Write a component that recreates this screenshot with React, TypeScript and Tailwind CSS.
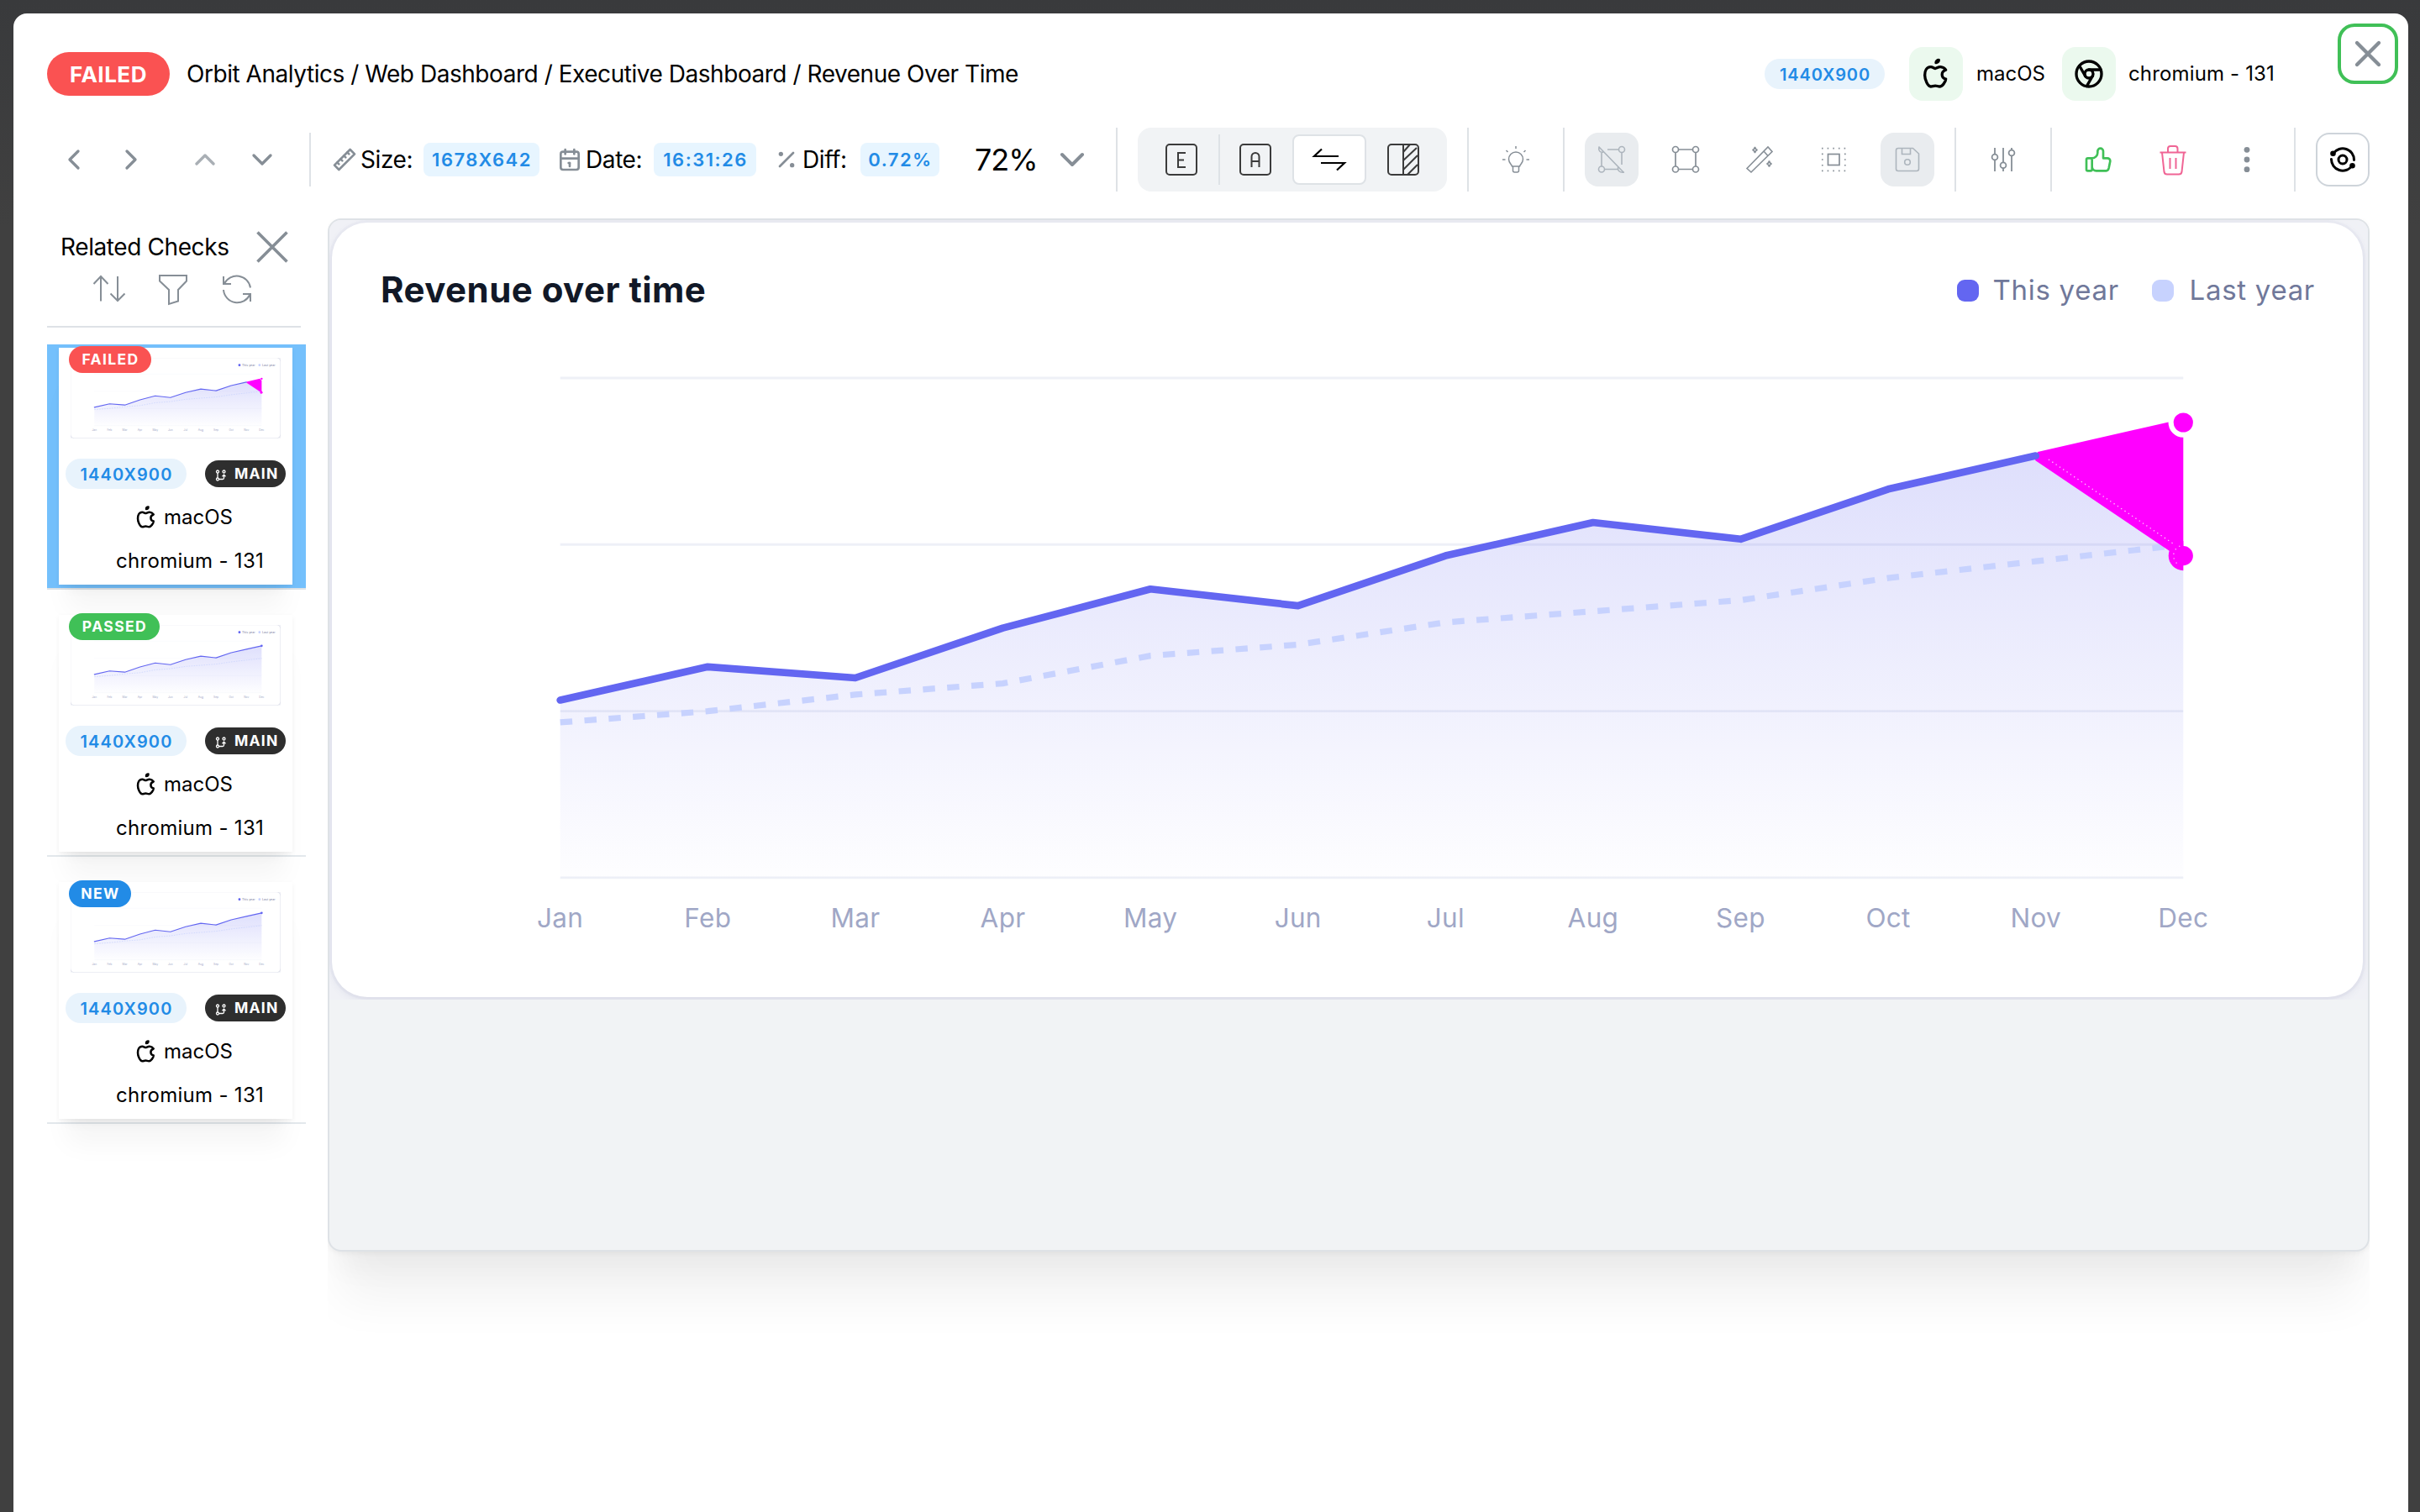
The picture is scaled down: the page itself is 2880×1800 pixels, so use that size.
import React from "react";
import { TbBrandApple, TbBrandChrome, TbChevronLeft, TbChevronRight, TbChevronUp, TbChevronDown, TbRuler2, TbCalendar, TbPercentage, TbX, TbThumbUp } from "react-icons/tb";

const MONTHS = ["Jan", "Feb", "Mar", "Apr", "May", "Jun", "Jul", "Aug", "Sep", "Oct", "Nov", "Dec"];
const THIS_YEAR = [32, 38, 36, 45, 52, 49, 58, 64, 61, 70, 76, 82];
const LAST_YEAR = [28, 30, 33, 35, 40, 42, 46, 48, 50, 54, 57, 60];

const px = (i: number) => 274.7 + i * 175.6;
const py = (v: number) => 783 - v * 6.61;
const toPath = (v: number[]) => v.map((n, i) => `${i ? "L" : "M"}${px(i).toFixed(1)} ${py(n).toFixed(1)}`).join(" ");

function Plot({ diff, thumb }: { diff: boolean; thumb: boolean }) {
  const id = React.useId();
  const solid = diff ? THIS_YEAR.slice(0, 11) : THIS_YEAR;
  const area = diff ? [...THIS_YEAR.slice(0, 11), 58] : THIS_YEAR;
  const ex = px(11);
  return (
    <svg viewBox="0 160 2426 680" className="block h-[680px] w-[2426px]">
      <defs>
        <linearGradient id={id} x1="0" y1="0" x2="0" y2="1">
          <stop offset="0" stopColor="#6366f1" stopOpacity="0.21" />
          <stop offset="1" stopColor="#6366f1" stopOpacity="0.01" />
        </linearGradient>
      </defs>
      {[0, 1, 2, 3].map((i) => (
        <line key={i} x1={px(0)} x2={ex} y1={188 + i * 198.3} y2={188 + i * 198.3} stroke="#eef0f7" strokeWidth="2.9" />
      ))}
      <path d={`${toPath(area)} L${ex} 783 L${px(0)} 783 Z`} fill={`url(#${id})`} />
      <path d={toPath(LAST_YEAR)} fill="none" stroke="#c7d2fe" strokeWidth="7.2" strokeDasharray="14.45 14.45" />
      {diff && (
        <g fill="#ff00ff">
          <path d={`M2033 276 L${ex} 236.5 V399.5 L2190 394 L2030 286 Z`} />
          <circle cx={ex} cy={py(82)} r="17.8" fill="#fff" />
          <circle cx={ex} cy={py(82)} r="11.6" />
          <path d={`M${ex} 382 A17.6 17.6 0 0 0 ${ex} 417.2 Z`} />
          <circle cx={ex} cy="399.6" r="11.6" />
          <path d="M2046 285 L2194 385" stroke="#ffc8ff" strokeWidth="1.3" strokeDasharray="1.3 3.9" fill="none" />
          <path d={`M${ex - 4} 388 A12.5 12.5 0 0 0 ${ex - 4} 411`} stroke="#ffd6ff" strokeWidth="1.2" strokeDasharray="1.2 4.6" fill="none" />
        </g>
      )}
      <path d={toPath(solid)} fill="none" stroke="#6366f1" strokeWidth={thumb ? 11 : 8.7} strokeLinecap="round" strokeLinejoin="round" />
      {!diff && <circle cx={ex} cy={py(82)} r="13" fill="#6366f1" />}
      {MONTHS.map((m, i) => (
        <text key={m} x={px(i)} y="842" textAnchor="middle" className="fill-[#a0a7c6] font-['Inter'] text-[31.500px] tracking-[0.300px]">{m}</text>
      ))}
    </svg>
  );
}

function RevenueCard({ diff = false, thumb = false }: { diff?: boolean; thumb?: boolean }) {
  return (
    <div className="h-[928px] w-[2426px] shrink-0 overflow-hidden bg-[#f0f1f6] pt-[3px] pr-[6px] pb-[3px] pl-[3px]">
      <div className="h-[922px] w-[2417px] rounded-[42px] bg-white shadow-[0_0_0_3px_rgba(90,100,170,0.03),0_3px_10px_rgba(80,90,150,0.11)]">
        <div className="flex h-[155px] items-start justify-between pt-[52px] pr-[57px] pl-[58px]">
          <h2 className="text-[42px] leading-[56px] font-bold tracking-[0.450px] whitespace-nowrap text-[#111827]">Revenue over time</h2>
          <div className="mt-px flex h-[56px] items-center text-[33px] tracking-[0.700px] whitespace-nowrap text-[#70789a]">
            <span className="mr-[17px] size-[26px] rounded-[9px] bg-[#6366f1]" />
            <span className="w-[189px]">This year</span>
            <span className="mr-[19px] size-[26px] rounded-[9px] bg-[#c7d2fe]" />
            <span>Last year</span>
          </div>
        </div>
        <div className="-ml-[3px] mt-[2px] [&>svg]:overflow-visible">
          <Plot diff={diff} thumb={thumb} />
        </div>
      </div>
    </div>
  );
}

function Divider() {
  return <div className="h-[76px] w-[2px] shrink-0 bg-[#dee2e6]" />;
}

function Cell({ filled = false, children }: { filled?: boolean; children: React.ReactNode }) {
  return (
    <div className={filled ? "flex size-16 shrink-0 items-center justify-center rounded-2xl bg-[#e9ecef] text-[#adb5bd]" : "flex size-16 shrink-0 items-center justify-center text-[#868e96]"}>
      {children}
    </div>
  );
}

/* Line icon on a 40 x 40 grid whose centre is 20,20. */
function Ico({ w = 2, children }: { w?: number; children: React.ReactNode }) {
  return (
    <svg viewBox="0 0 40 40" className="size-10 shrink-0 overflow-visible" fill="none" stroke="currentColor" strokeWidth={w}>
      {children}
    </svg>
  );
}

function Metric({ icon, label, labelClass, value, valueClass }: { icon: React.ReactNode; label: string; labelClass: string; value: string; valueClass: string }) {
  return (
    <div className="flex shrink-0 items-center">
      <span className="text-[#868e96]">{icon}</span>
      <span className={`pl-[3px] text-[28px] tracking-[-0.400px] whitespace-nowrap ${labelClass}`}>{label}</span>
      <span className={`flex h-10 items-center justify-center rounded-lg bg-[#e7f5ff] pl-px text-[22px] font-semibold tracking-[1.500px] text-[#228be6] ${valueClass}`}>{value}</span>
    </div>
  );
}

function BranchIcon() {
  return (
    <svg viewBox="0 0 14 14" className="mt-1 size-[14px]" fill="none" stroke="white" strokeWidth="1.3">
      <circle cx="3" cy="2.5" r="1.5" />
      <circle cx="10.5" cy="2.5" r="1.5" />
      <circle cx="3" cy="11.5" r="1.5" />
      <path d="M3 4v6M4.5 11.5h4.5q1.5 0 1.5-1.5V6.5M8.5 8.2l2-2 2 2" />
    </svg>
  );
}

function CheckCard({ status, statusClass, active = false, diff = false }: { status: string; statusClass: string; active?: boolean; diff?: boolean }) {
  return (
    <div className={active ? "h-[292px] w-[308px] border-b-2 border-[#dee2e6] bg-[#74c0fc] px-[14px] pt-1 bg-clip-padding" : "h-[292px] w-[308px] border-b-2 border-[#e3e8ec] px-[14px] pt-1"}>
      <div className="relative flex h-[282px] w-[278px] flex-col bg-white shadow-[0_2px_6px_rgba(0,0,0,0.05),0_40px_30px_-10px_rgba(0,0,0,0.04),0_14px_14px_-10px_rgba(0,0,0,0.05)]">
        <div className="mt-3 ml-[14px] h-[96px] w-[250px] overflow-hidden">
          <div className="h-[928px] w-[2426px] origin-top-left scale-[0.10305]">
            <RevenueCard diff={diff} thumb />
          </div>
        </div>
        <span className={`absolute top-[-2px] left-3 flex h-8 items-center justify-center rounded-full pl-px text-[17.500px] font-bold tracking-[1.400px] text-white ${statusClass}`}>{status}</span>
        <div className="mt-6 ml-2 flex h-9 items-center">
          <span className="flex h-9 w-[144px] items-center justify-center rounded-full bg-[#e8f3fc] pt-px pl-px text-[20px] font-semibold tracking-[1.100px] text-[#228be6]">1440X900</span>
          <span className="ml-[22px] flex h-8 w-24 items-center gap-[9px] rounded-full bg-[#2e2e2e] pl-3 text-[17.500px] font-bold tracking-[1.200px] text-white"><BranchIcon />MAIN</span>
        </div>
        <div className="mt-4 flex h-9 items-center pl-[89px] text-[24px]">
          <TbBrandApple className="mr-[6px] size-[30px]" />macOS
        </div>
        <div className="mt-4 flex h-9 items-center pl-[68px] text-[24px] tracking-[0.300px] whitespace-nowrap">chromium - 131</div>
      </div>
    </div>
  );
}

export default function App() {
  return (
    <div className="h-[1800px] w-[2880px] overflow-hidden bg-linear-to-b from-[#393a3c] to-[#404040] to-15% pt-4 pl-4 font-['Inter',sans-serif] text-black">
      <div className="relative h-[1784px] w-[2850px] rounded-t-2xl bg-white pt-10 pl-10">
        <button className="absolute top-3 right-3 flex size-[72px] items-center justify-center rounded-[20px] border-4 border-[#40c057] text-[#868e96]">
          <TbX className="size-[52px]" />
        </button>
        <header className="flex h-16 items-center">
          <span className="flex h-[52px] w-[146px] items-center justify-center rounded-full bg-[#fa5252] text-[26px] font-bold tracking-[0.500px] text-white">FAILED</span>
          <h1 className="ml-[20px] w-[1878px] text-[28px] tracking-[-0.460px] whitespace-nowrap">Orbit Analytics / Web Dashboard / Executive Dashboard / Revenue Over Time</h1>
          <span className="mr-[29px] flex h-9 w-[143px] items-center justify-center rounded-full bg-[#e8f3fc] pt-px pl-px text-[20px] font-semibold tracking-[0.850px] text-[#228be6]">1440X900</span>
          <span className="flex size-16 items-center justify-center rounded-2xl bg-[#ebf9ee]"><TbBrandApple className="size-10" /></span>
          <span className="w-[118px] pl-4 text-[24px]">macOS</span>
          <span className="flex size-16 items-center justify-center rounded-2xl bg-[#ebf9ee]"><TbBrandChrome className="size-10" /></span>
          <span className="pl-[15px] text-[24px] tracking-[0.150px] whitespace-nowrap">chromium - 131</span>
        </header>

        <div className="mt-8 flex h-[76px] items-center">
          <div className="flex w-[312px] shrink-0 items-center pl-3 text-[#868e96]">
            <TbChevronLeft className="size-10" />
            <TbChevronRight className="ml-7 size-10" />
            <TbChevronUp className="ml-12 size-10 opacity-70" />
            <TbChevronDown className="ml-7 size-10" />
          </div>
          <div className="h-16 w-[2px] shrink-0 bg-[#dee2e6]" />
          <div className="flex w-[960px] shrink-0 items-center pl-6">
            <Metric icon={<TbRuler2 className="size-8" />} label="Size:" labelClass="w-[78px]" value="1678X642" valueClass="w-[138px]" />
            <div className="w-5" />
            <Metric icon={<TbCalendar className="size-8" />} label="Date:" labelClass="w-[84px]" value="16:31:26" valueClass="w-[122px]" />
            <div className="w-5" />
            <Metric icon={<TbPercentage className="size-8" />} label="Diff:" labelClass="w-[72px]" value="0.72%" valueClass="w-[94px]" />
            <span className="ml-[42px] w-[92px] text-[36px] tracking-[-1px]">72%</span>
            <TbChevronDown className="size-12 text-[#868e96]" />
          </div>
          <div className="-ml-[2px] flex items-center gap-6">
            <Divider />
            <div className="flex h-[76px] w-[368px] shrink-0 rounded-2xl bg-[#f1f3f5] p-2 text-[#3b3b3b]">
              <div className="flex w-[88px] items-center justify-center">
                <Ico><rect x="2" y="2" width="36" height="36" rx="4" /><path d="M25 12h-9v17h9M16 20.5h7" /></Ico>
              </div>
              <div className="flex w-[88px] items-center justify-center border-l-2 border-[#dee2e6] pr-[2px]">
                <Ico><rect x="2" y="2" width="36" height="36" rx="4" /><path d="M15.500 29V16.500a4.500 4.500 0 0 1 9 0V29M15.500 22h9" /></Ico>
              </div>
              <div className="flex w-[88px] items-center justify-center rounded-lg border-2 border-[#dee2e6] bg-white text-black">
                <Ico w={2.2}><path d="M31 16H2l9-8.500M10 24h28l-9 8.500" /></Ico>
              </div>
              <div className="flex w-[88px] items-center justify-center">
                <Ico><rect x="2" y="2" width="36" height="36" rx="4" /><path d="M20 2v36M20 11l8-9M20 21l16-15M20 32l17-17M25 38l12-12" /></Ico>
              </div>
            </div>
            <Divider />
            <Cell>
              <Ico w={1.5}>
                <path d="M15.500 28c0-2-4-3.500-4-8.500a8.500 8.500 0 0 1 17 0c0 5-4 6.500-4 8.500zM16.500 28v5q0 2 2 2h3q2 0 2-2v-5M20 4v3M8.500 9l2 2M31.500 9l-2 2M4 20h3.500M32.500 20H36" />
              </Ico>
            </Cell>
            <Divider />
            <Cell filled>
              <Ico w={1.6}>
                <circle cx="8" cy="31.500" r="3.500" /><circle cx="32" cy="8" r="3.500" />
                <path d="M8 28V12M5 5c-1 4 1 7 5 6M11.500 31.500H28M32 11.500V26M15 8h13.500M4.500 4.500l30 31M28 28c-2 5 2 8 7 7" />
              </Ico>
            </Cell>
            <Cell>
              <Ico w={1.7}>
                <circle cx="8" cy="8" r="3.500" /><circle cx="32" cy="8" r="3.500" /><circle cx="8" cy="31.500" r="3.500" /><circle cx="32" cy="31.500" r="3.500" />
                <path d="M11.500 8h17M11.500 31.500h17M8 11.500V28M32 11.500V28" />
              </Ico>
            </Cell>
            <Cell>
              <Ico w={1.6}>
                <path d="M5 30.500L30 5l5 5.500L10 35zM25 10l5 5.500" />
                <path d="M14.500 5q.5 3 3 3.500-2.500.5-3 3.500-.5-3-3-3.500 2.500-.5 3-3.500zM31.500 21.500q.5 3 3 3.500-2.500.5-3 3.500-.5-3-3-3.500 2.500-.5 3-3.500z" />
              </Ico>
            </Cell>
            <Cell>
              <Ico w={1.7}>
                <rect x="13.500" y="13.500" width="13.500" height="13" />
                <path d="M6 6.700h30M6 33.400h30" strokeDasharray="1.600 5.050" />
                <path d="M6.800 12.600v16M33.800 12.600v16" strokeDasharray="1.600 5.050" />
              </Ico>
            </Cell>
            <Cell filled>
              <Ico w={1.6}>
                <path d="M9 6.500h17.500l7 6.500v18q0 2.500-2.500 2.500H9q-2.500 0-2.500-2.500V9q0-2.500 2.500-2.500zM13.500 6.500v7h10v-7" /><circle cx="20" cy="23" r="3.300" />
              </Ico>
            </Cell>
            <Divider />
            <Cell>
              <Ico w={1.8}>
                <path d="M10 6v8M10 20.500V34M20 6v17.500M20 30v4M30 6v3M30 15.500V34" /><circle cx="10" cy="17" r="3.400" /><circle cx="20" cy="26.800" r="3.400" /><circle cx="30" cy="12" r="3.400" />
              </Ico>
            </Cell>
            <Divider />
            <Cell><TbThumbUp className="size-10 text-[#40c057] [stroke-width:1.6]" /></Cell>
            <Cell>
              <svg viewBox="0 0 40 40" className="size-10 text-[#f06595]" fill="none" stroke="currentColor" strokeWidth="2">
                <path d="M4.500 11.500h31M14 11.500V7q0-3 3-3h5.500q3 0 3 3v4.500M7 11.500l2.500 23q.5 3 3.500 3h14q3 0 3.500-3l2.500-23M16.500 18v13M23.500 18v13" />
              </svg>
            </Cell>
            <Cell>
              <svg viewBox="0 0 40 40" className="size-10" fill="currentColor"><circle cx="20" cy="8.300" r="3.400" /><circle cx="20" cy="20" r="3.400" /><circle cx="20" cy="31.700" r="3.400" /></svg>
            </Cell>
            <Divider />
            <div className="flex size-16 shrink-0 items-center justify-center rounded-2xl border-2 border-[#ced4da] text-black">
              <Ico w={3}>
                <circle cx="20" cy="20" r="5" />
                <path d="M9 12.500A13.500 13.500 0 0 1 33.500 20.500M31 27.500A13.500 13.500 0 0 1 6.500 19.500" strokeLinecap="round" />
                <circle cx="8.500" cy="12.800" r="3.300" fill="currentColor" stroke="none" /><circle cx="31.500" cy="27.200" r="3.300" fill="currentColor" stroke="none" />
              </Ico>
            </div>
          </div>
        </div>

        <main className="mt-8 flex items-start">
          <aside className="w-[334px] shrink-0">
            <div className="flex h-[68px] items-center pl-4 text-[28px] tracking-[-0.400px] whitespace-nowrap">
              <span className="w-[232px]">Related Checks</span>
              <span className="text-[#868e96]"><Ico w={3.6}><path d="M2.500 2.500l35 35M37.500 2.500l-35 35" /></Ico></span>
            </div>
            <div className="flex h-8 items-center gap-9 pl-[54px] text-[#868e96]">
              <Ico w={2}><path d="M10 34.500V5M1.500 14L10 5l8.500 9M30 5v29M21.500 25.500L30 34l8.500-8.500" /></Ico>
              <Ico w={2}><path d="M4 4h32v6.500L26 21v13.500L15 38V21L4 10.500z" /></Ico>
              <Ico w={2}><path d="M36 18.500A16.500 16.500 0 0 0 5 13.500M4 5v9h9M4 21A16.500 16.500 0 0 0 35.500 26.500M36 35v-9h-9" /></Ico>
            </div>
            <div className="mt-7 mb-5 h-[2px] w-[302px] bg-[#dee2e6]" />
            <div className="flex flex-col gap-[26px]">
              <CheckCard status="FAILED" statusClass="w-[98px] bg-[#fa5252]" active diff />
              <CheckCard status="PASSED" statusClass="w-[108px] bg-[#40c057]" />
              <CheckCard status="NEW" statusClass="w-[74px] bg-[#228be6]" />
            </div>
          </aside>
          <div className="shrink-0 [clip-path:inset(0_0_-140px_0)]">
            <section className="h-[1230px] w-[2430px] overflow-hidden rounded-2xl border-2 border-[#dee2e6] bg-[#f1f3f5] shadow-[0_2px_6px_rgba(0,0,0,0.05),0_72px_56px_-14px_rgba(0,0,0,0.05),0_34px_34px_-14px_rgba(0,0,0,0.04)]">
              <RevenueCard diff />
            </section>
          </div>
        </main>
      </div>
    </div>
  );
}
